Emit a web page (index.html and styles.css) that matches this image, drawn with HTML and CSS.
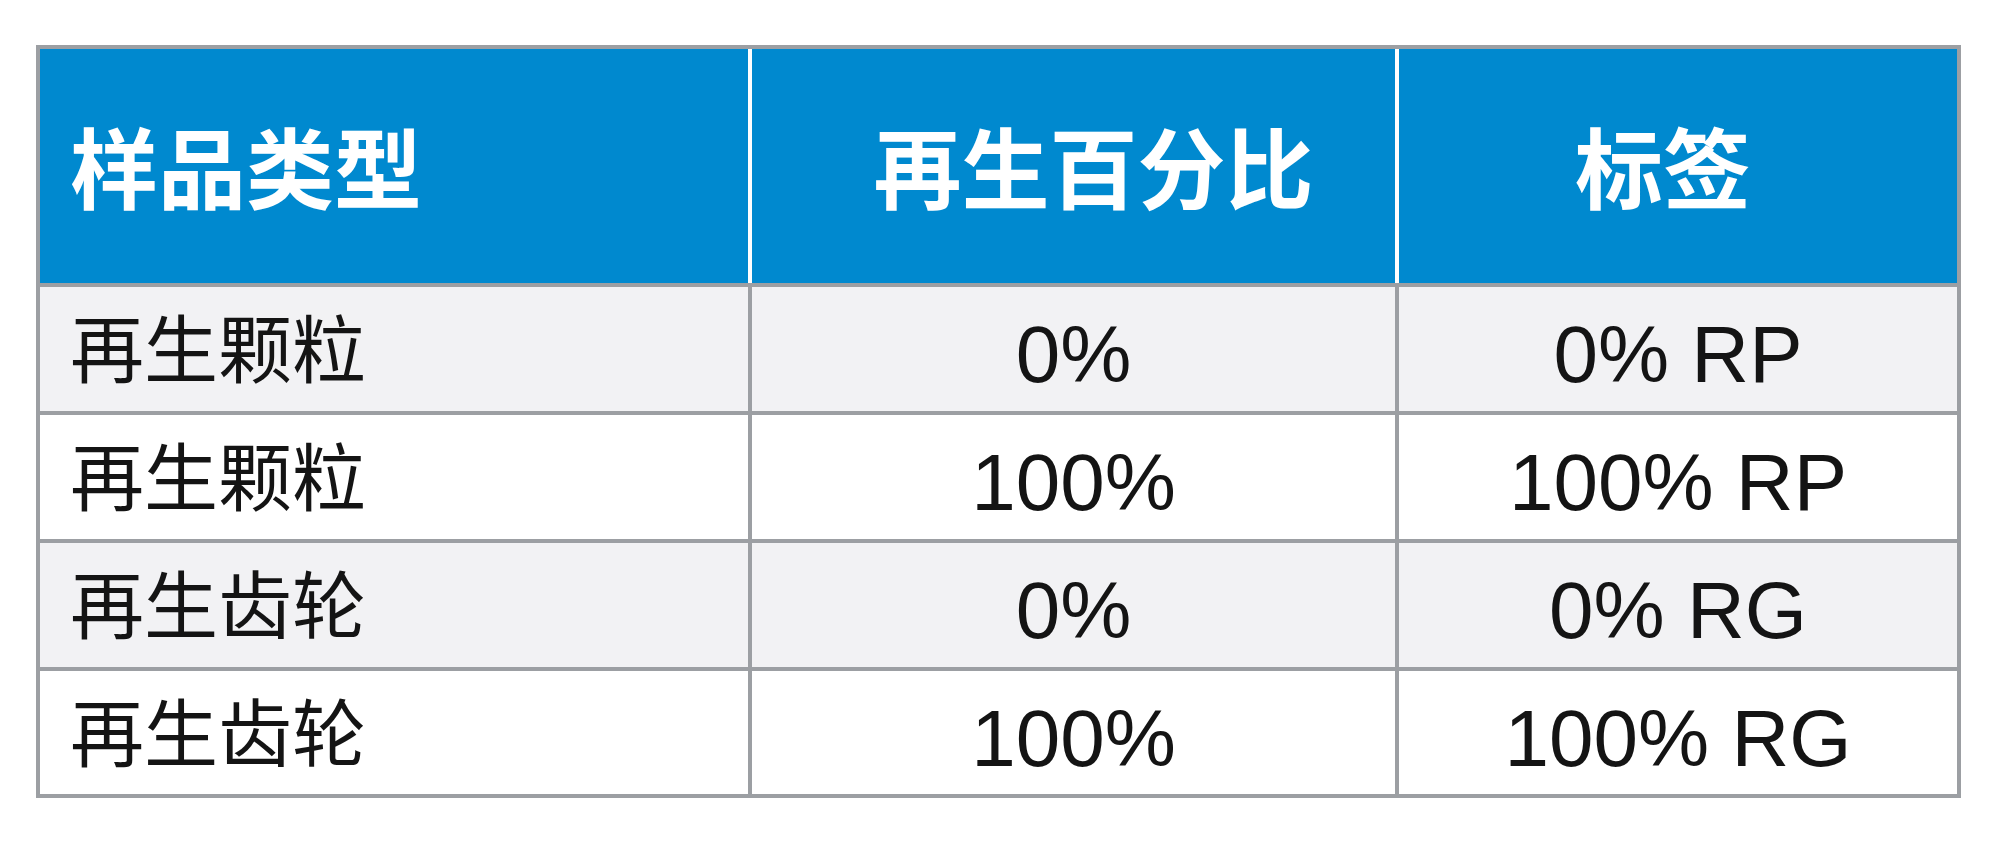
FILE: index.html
```html
<!DOCTYPE html>
<html lang="zh-CN">
<head>
<meta charset="utf-8">
<title>再生标签</title>
<link rel="stylesheet" href="styles.css">
</head>
<body>
<div class="tbl">
  <div class="head">
    <div class="hc hc-1">样品类型</div>
    <div class="hc hc-2">再生百分比</div>
    <div class="hc hc-3">标签</div>
  </div>
  <div class="row odd">
    <div class="c name">再生颗粒</div>
    <div class="c num">0%</div>
    <div class="c num">0% RP</div>
  </div>
  <div class="row">
    <div class="c name">再生颗粒</div>
    <div class="c num">100%</div>
    <div class="c num">100% RP</div>
  </div>
  <div class="row odd">
    <div class="c name">再生齿轮</div>
    <div class="c num">0%</div>
    <div class="c num">0% RG</div>
  </div>
  <div class="row last">
    <div class="c name">再生齿轮</div>
    <div class="c num">100%</div>
    <div class="c num">100% RG</div>
  </div>
</div>
</body>
</html>
```
FILE: styles.css
```css
html, body {
  margin: 0;
  padding: 0;
  background: #ffffff;
}

body {
  font-family: "Noto Sans CJK SC", "Liberation Sans", sans-serif;
}

.tbl {
  margin: 45px 0 0 36px;
  width: 1925px;
  box-sizing: border-box;
  border: 4px solid #9c9fa3;
  background: #9c9fa3;
  display: flex;
  flex-direction: column;
  gap: 4px;
}

.head,
.row {
  display: grid;
  grid-template-columns: 708px 643px 558px;
  column-gap: 4px;
}

.head {
  height: 234px;
  background: #ffffff;
}

.row {
  height: 124px;
}

.row.last {
  height: 123px;
}

.hc {
  background: #0089cf;
  color: #ffffff;
  font-family: "Noto Sans CJK SC", sans-serif;
  font-weight: 700;
  font-size: 88px;
  line-height: 1;
  display: flex;
  align-items: center;
  padding-bottom: 4px;
  box-sizing: border-box;
}

.hc-1 {
  padding-left: 30px;
}

.hc-2 {
  justify-content: center;
  padding-left: 40px;
}

.hc-3 {
  justify-content: center;
  padding-right: 30px;
}

.c {
  background: #ffffff;
  color: #141414;
  display: flex;
  align-items: center;
  line-height: 1;
  box-sizing: border-box;
}

.row.odd .c {
  background: #f2f2f4;
}

.name {
  font-family: "Noto Sans CJK SC", sans-serif;
  font-size: 74px;
  padding-left: 30px;
  padding-bottom: 8px;
}

.num {
  font-family: "Liberation Sans", Arial, sans-serif;
  font-size: 80px;
  justify-content: center;
  padding-top: 12px;
}
```
